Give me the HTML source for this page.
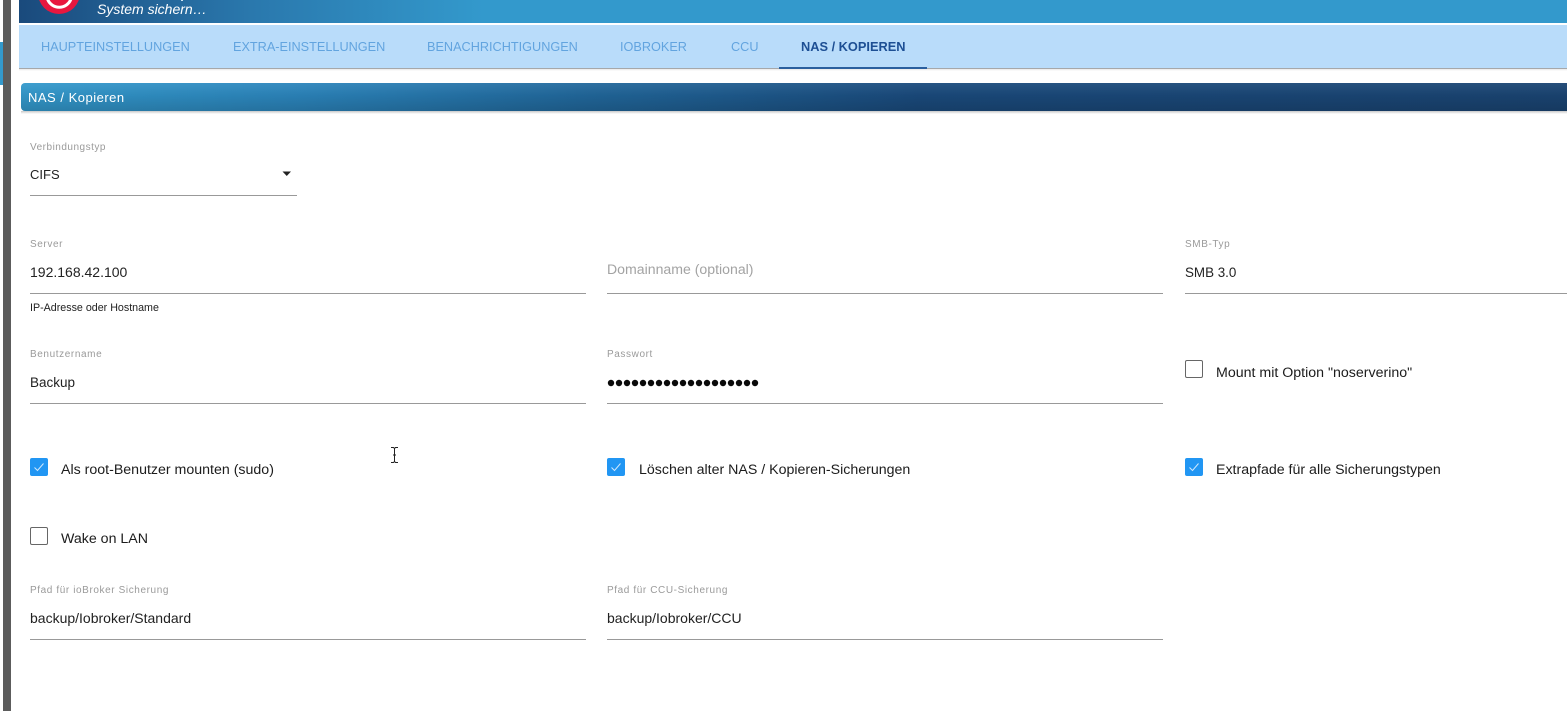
<!DOCTYPE html>
<html>
<head>
<meta charset="utf-8">
<style>
html,body{margin:0;padding:0;background:#fff;}
body{position:relative;width:1567px;height:711px;overflow:hidden;font-family:"Liberation Sans",sans-serif;color:#111;}
.a{position:absolute;white-space:nowrap;}
.tab{position:absolute;top:39px;font-size:12.7px;line-height:16px;color:#62a4df;white-space:nowrap;}
.lbl{position:absolute;font-size:10px;line-height:12px;color:#9a9a9a;letter-spacing:.6px;white-space:nowrap;}
.val{position:absolute;font-size:14px;line-height:16px;color:#222;white-space:nowrap;}
.line{position:absolute;height:1px;background:#999;}
.cb{position:absolute;width:18px;height:18px;box-sizing:border-box;border-radius:2px;}
.off{border:1.5px solid #666;background:#fff;}
.on{background:#2196f3;}
.on svg{position:absolute;left:0;top:0;}
.ct{position:absolute;font-size:14.2px;line-height:17px;color:#1c1c1c;white-space:nowrap;}
</style>
</head>
<body>
<div class="a" style="left:3px;top:0;width:8px;height:711px;background:#5c5c5c;"></div>
<div class="a" style="left:0;top:42px;width:3px;height:43px;background:#3399cc;"></div>

<div class="a" style="left:19px;top:0;width:1548px;height:23px;background:linear-gradient(90deg,#1a4a7c 0%,#2a78ad 15%,#3399cc 30%,#3399cc 100%);overflow:hidden;">
  <svg width="80" height="23" style="position:absolute;left:0;top:0;">
    <circle cx="40" cy="-7" r="21" fill="#e8173f"/>
    <path d="M28.5 -1 A12.5 12.5 0 0 0 52 -1" fill="none" stroke="#fff" stroke-width="3"/>
  </svg>
  <div class="a" style="left:78px;top:1px;font-size:14px;line-height:17px;font-style:italic;color:#fff;">System sichern…</div>
  <div class="a" style="left:162px;top:0;width:2px;height:1px;background:#cfe6f4;"></div>
</div>

<div class="a" style="left:19px;top:25px;width:1548px;height:43px;background:#b9dcfa;"></div>
<div class="a" style="left:19px;top:68px;width:1548px;height:1px;background:#a6a8aa;"></div>
<div class="a" style="left:19px;top:69px;width:1548px;height:2px;background:linear-gradient(#e8e8e8,#fff);"></div>

<div class="tab" style="left:41px;">HAUPTEINSTELLUNGEN</div>
<div class="tab" style="left:233px;">EXTRA-EINSTELLUNGEN</div>
<div class="tab" style="left:427px;">BENACHRICHTIGUNGEN</div>
<div class="tab" style="left:620px;">IOBROKER</div>
<div class="tab" style="left:731px;">CCU</div>
<div class="tab" style="left:801px;color:#1d4f94;font-weight:bold;font-size:12.8px;">NAS / KOPIEREN</div>
<div class="a" style="left:779px;top:67px;width:148px;height:2px;background:#2a5f9e;"></div>

<div class="a" style="left:21px;top:83px;width:1546px;height:28px;border-radius:4px 0 0 4px;background:linear-gradient(90deg,#3399cc 0%,#2b84bb 18%,#21689c 36%,#1a4a7c 58%,#1a4472 100%);"></div>
<div class="a" style="left:21px;top:83px;width:1546px;height:28px;border-radius:4px 0 0 4px;background:linear-gradient(rgba(255,255,255,.06),rgba(0,0,0,.05) 45%,rgba(0,0,0,.16));"></div>
<div class="a" style="left:21px;top:111px;width:1546px;height:3px;background:linear-gradient(#c8c8c8,#fff);"></div>
<div class="a" style="left:28px;top:90px;font-size:13px;line-height:15px;color:#fff;letter-spacing:.5px;">NAS / Kopieren</div>

<div class="lbl" style="left:30px;top:142px;letter-spacing:.5px;">Verbindungstyp</div>
<div class="val" style="left:30px;top:167px;font-size:13px;">CIFS</div>
<svg class="a" style="left:282px;top:171px;" width="10" height="6"><path d="M0.5 0.5H9L4.75 5z" fill="#222"/></svg>
<div class="line" style="left:30px;top:195px;width:267px;"></div>

<div class="lbl" style="left:30px;top:239px;">Server</div>
<div class="val" style="left:30px;top:264px;">192.168.42.100</div>
<div class="line" style="left:30px;top:293px;width:556px;"></div>
<div class="a" style="left:30px;top:302px;font-size:10.7px;line-height:12px;color:#222;">IP-Adresse oder Hostname</div>

<div class="a" style="left:607px;top:261px;font-size:14.1px;line-height:17px;color:#a3a3a3;">Domainname (optional)</div>
<div class="line" style="left:607px;top:293px;width:556px;"></div>

<div class="lbl" style="left:1185px;top:239px;">SMB-Typ</div>
<div class="val" style="left:1185px;top:265px;font-size:13.4px;">SMB 3.0</div>
<div class="line" style="left:1185px;top:293px;width:382px;"></div>

<div class="lbl" style="left:30px;top:349px;">Benutzername</div>
<div class="val" style="left:30px;top:375px;font-size:13.5px;">Backup</div>
<div class="line" style="left:30px;top:403px;width:556px;"></div>

<div class="lbl" style="left:607px;top:349px;">Passwort</div>
<svg class="a" style="left:607px;top:378px;" width="155" height="10" fill="#0a0a0a">
<circle cx="4" cy="5" r="3.2"/><circle cx="12" cy="5" r="3.2"/><circle cx="20" cy="5" r="3.2"/><circle cx="28" cy="5" r="3.2"/><circle cx="36" cy="5" r="3.2"/><circle cx="44" cy="5" r="3.2"/><circle cx="52" cy="5" r="3.2"/><circle cx="60" cy="5" r="3.2"/><circle cx="68" cy="5" r="3.2"/><circle cx="76" cy="5" r="3.2"/><circle cx="84" cy="5" r="3.2"/><circle cx="92" cy="5" r="3.2"/><circle cx="100" cy="5" r="3.2"/><circle cx="108" cy="5" r="3.2"/><circle cx="116" cy="5" r="3.2"/><circle cx="124" cy="5" r="3.2"/><circle cx="132" cy="5" r="3.2"/><circle cx="140" cy="5" r="3.2"/><circle cx="148" cy="5" r="3.2"/>
</svg>
<div class="line" style="left:607px;top:403px;width:556px;"></div>

<div class="cb off" style="left:1185px;top:360px;"></div>
<div class="ct" style="left:1216px;top:365px;">Mount mit Option "noserverino"</div>

<div class="cb on" style="left:30px;top:458px;"><svg width="18" height="18"><path d="M4.5 9.5L7.5 12.5L13.5 5.5" fill="none" stroke="#cfe8fd" stroke-width="1"/></svg></div>
<div class="ct" style="left:61px;top:462px;">Als root-Benutzer mounten (sudo)</div>

<div class="cb on" style="left:607px;top:458px;"><svg width="18" height="18"><path d="M4.5 9.5L7.5 12.5L13.5 5.5" fill="none" stroke="#cfe8fd" stroke-width="1"/></svg></div>
<div class="ct" style="left:639px;top:462px;">Löschen alter NAS / Kopieren-Sicherungen</div>

<div class="cb on" style="left:1185px;top:458px;"><svg width="18" height="18"><path d="M4.5 9.5L7.5 12.5L13.5 5.5" fill="none" stroke="#cfe8fd" stroke-width="1"/></svg></div>
<div class="ct" style="left:1216px;top:462px;">Extrapfade für alle Sicherungstypen</div>

<div class="cb off" style="left:30px;top:527px;"></div>
<div class="ct" style="left:61px;top:531px;">Wake on LAN</div>

<div class="lbl" style="left:30px;top:585px;">Pfad für ioBroker Sicherung</div>
<div class="val" style="left:30px;top:610px;">backup/Iobroker/Standard</div>
<div class="line" style="left:30px;top:639px;width:556px;"></div>

<div class="lbl" style="left:607px;top:585px;">Pfad für CCU-Sicherung</div>
<div class="val" style="left:607px;top:610px;">backup/Iobroker/CCU</div>
<div class="line" style="left:607px;top:639px;width:556px;"></div>

<svg class="a" style="left:390px;top:447px;" width="9" height="16"><path d="M1 0.5H3.5L4.5 1.5L5.5 0.5H8M4.5 1.5V14.5M1 15.5H3.5L4.5 14.5L5.5 15.5H8M3 8H6" fill="none" stroke="#222" stroke-width="1"/></svg>
</body>
</html>
